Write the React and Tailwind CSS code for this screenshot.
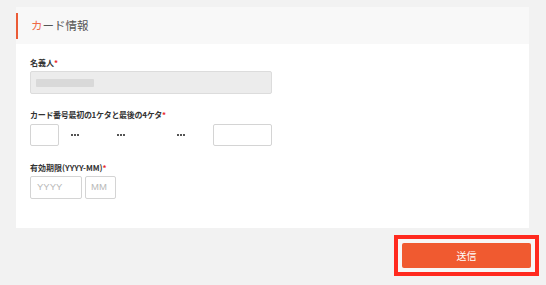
export default function App() {
  const dots = (
    <div className="flex gap-[1px]">
      <span className="w-[2px] h-[2px] bg-[#555]" />
      <span className="w-[2px] h-[2px] bg-[#555]" />
      <span className="w-[2px] h-[2px] bg-[#555]" />
    </div>
  );

  return (
    <div
      className="w-[546px] h-[285px] bg-[#f2f2f2] pt-[7px] overflow-hidden"
      style={{ fontFamily: '"Noto Sans CJK JP", "Noto Sans", sans-serif' }}
    >
      {/* Card panel */}
      <div className="ml-[16px] w-[513px] bg-white">
        <div className="h-[37px] bg-[#f8f8f8] flex items-center">
          <div className="w-[2px] h-[26px] bg-[#eb5b36]" />
          <h2 className="ml-[13px] text-[11.5px] leading-none text-[#555]">
            <span className="text-[#ee6a47]">カ</span>ード情報
          </h2>
        </div>

        <div className="px-[14px] pt-[13px] pb-[29px]">
          <label className="block h-[12px] text-[8px] leading-[12px] font-bold text-[#333]">
            名義人<span className="text-[#e8272b]">*</span>
          </label>
          <div className="mt-[2px] w-[242px] h-[23px] bg-[#ececec] border border-[#dcdcdc] rounded-[2px] flex items-center pl-[5px]">
            <div className="w-[58px] h-[8px] bg-[#d9d9d9] rounded-[1px]" />
          </div>

          <label className="block mt-[15px] h-[12px] text-[8px] leading-[12px] font-bold text-[#333] tracking-[-0.3px]">
            カード番号最初の1ケタと最後の4ケタ<span className="text-[#e8272b]">*</span>
          </label>
          <div className="mt-[3px] flex items-center">
            <div className="w-[29px] h-[22px] border border-[#d4d4d4] rounded-[2px]" />
            <div className="ml-[12px]">{dots}</div>
            <div className="ml-[38px]">{dots}</div>
            <div className="ml-[52px]">{dots}</div>
            <div className="ml-[28px] w-[59px] h-[22px] border border-[#d4d4d4] rounded-[2px]" />
          </div>

          <label className="block mt-[16px] h-[12px] text-[8px] leading-[12px] font-bold text-[#333]">
            有効期限(YYYY-MM)<span className="text-[#e8272b]">*</span>
          </label>
          <div className="mt-[2px] flex gap-[3px]">
            <div
              className="w-[52px] h-[23px] border border-[#d4d4d4] rounded-[2px] flex items-center pl-[6px] text-[9.5px] text-[#b8b8b8]"
              style={{ fontFamily: '"Liberation Sans", sans-serif' }}
            >
              YYYY
            </div>
            <div
              className="w-[31px] h-[23px] border border-[#d4d4d4] rounded-[2px] flex items-center pl-[5px] text-[9.5px] text-[#b8b8b8]"
              style={{ fontFamily: '"Liberation Sans", sans-serif' }}
            >
              MM
            </div>
          </div>
        </div>
      </div>

      {/* Submit */}
      <div className="mt-[7px] flex justify-end pr-[7px]">
        <div className="border-[4px] border-[#ff2a1f] p-[4px] bg-[#f7f7f7]">
          <button className="w-[129px] h-[25px] bg-[#f05a30] text-white text-[10px] rounded-[2px] flex items-center justify-center">
            送信
          </button>
        </div>
      </div>
    </div>
  );
}
